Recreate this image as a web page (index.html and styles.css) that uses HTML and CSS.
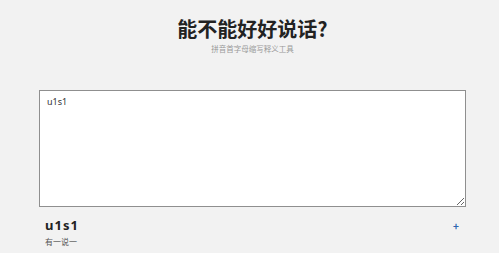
FILE: index.html
```html
<!DOCTYPE html>
<html lang="zh">
  <head>
    <meta charset="UTF-8" />
    <title>能不能好好说话?</title>
    <link rel="stylesheet" href="styles.css">
  </head>
  <body>
    <div class="page">
      <h1 class="title">能不能好好说话?</h1>
      <p class="subtitle">拼音首字母缩写释义工具</p>
      <textarea class="input">u1s1</textarea>
      <div class="result">
        <div class="result-text">
          <div class="result-word">u1s1</div>
          <div class="result-meaning">有一说一</div>
        </div>
        <span class="add">+</span>
      </div>
    </div>
  </body>
</html>
```

FILE: styles.css
```css
body {
  margin: 0;
  background: #f2f2f2;
  font-family: "Noto Sans CJK SC", "Noto Sans", sans-serif;
  color: #222;
}

.page {
  padding: 16px 33px 0 39px;
}

.title {
  margin: 0;
  text-align: center;
  font-size: 20px;
  line-height: 25px;
  font-weight: 700;
  color: #222;
}

.subtitle {
  margin: 2px 0 0;
  text-align: center;
  font-size: 7.5px;
  line-height: 12px;
  color: #999;
}

.input {
  display: block;
  box-sizing: border-box;
  width: 100%;
  height: 117px;
  margin-top: 35px;
  padding: 4px 7px;
  border: 1px solid #8f8f8f;
  background: #fff;
  font-family: "Noto Sans", sans-serif;
  font-size: 9px;
  color: #333;
  outline: none;
}

.result {
  display: flex;
  justify-content: space-between;
  align-items: flex-start;
  padding: 10px 7px 0 6px;
}

.result-word {
  font-family: "Noto Sans", sans-serif;
  font-size: 13px;
  line-height: 16px;
  font-weight: 700;
  letter-spacing: 1px;
  color: #222;
}

.result-meaning {
  margin-top: 3px;
  font-size: 8px;
  line-height: 12px;
  color: #555;
}

.add {
  margin-top: 1px;
  font-size: 10px;
  line-height: 16px;
  font-weight: 700;
  color: #2f65b0;
}
```
